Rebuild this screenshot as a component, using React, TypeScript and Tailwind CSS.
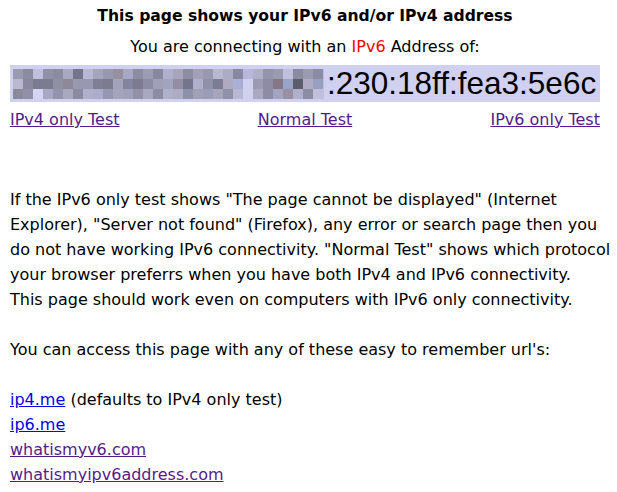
import React from "react";

const grid: string[][] = [
  ["#9b9bb0", "#8a8ca2", "#c0c0dc", "#9090a8", "#8c8ca0", "#a8a8c0", "#74748a", "#b8b8d4", "#a4a4bc", "#9898b0", "#96909f", "#a8a8c4", "#8c8ca2", "#9c9cb4", "#88889c", "#b0b0cc", "#a8a4bc", "#8c8ca2", "#a4a0b8", "#9898b0", "#b8b8d0", "#acacc4", "#8888a0", "#b8b8dc", "#b0b0c8", "#9494ac", "#9a9ab0", "#c0c0dc", "#8c8aa0", "#9a9ab0", "#8c8ca4"],
  ["#b8b8d0", "#8888a0", "#7c7c90", "#7a7c90", "#9090a4", "#8e8898", "#9898b0", "#9898b0", "#807e94", "#7c7c90", "#a4a4bc", "#8484a0", "#7c7c90", "#8c8ca4", "#a0a0b8", "#a0a4bc", "#948ea4", "#74748c", "#b0b0cc", "#9090a8", "#7c7c94", "#b0aac0", "#a8b0d4", "#d0d0f0", "#9c9ab0", "#8c8ca4", "#847888", "#98a4c8", "#5c5c6c", "#b0aac4", "#98a0c0"],
  ["#8a8a9c", "#9090a8", "#d4d4f4", "#a8a8c4", "#9494ac", "#a8a8c0", "#8a8aa0", "#b0b0cc", "#acaccc", "#9696b0", "#a4a4bc", "#a0a0b8", "#9490a8", "#a8a8c0", "#8c8ca2", "#b0b0cc", "#acacc4", "#8c90a8", "#a0a0b8", "#9c9cb8", "#a8a4bc", "#9090a8", "#b8b8d4", "#d0d0f0", "#a8a8c0", "#8c8ca4", "#a4a4c0", "#9890a4", "#b0b0cc", "#8c8ca4", "#c0c0dc"],
];

function Pixelated() {
  return (
    <svg width={311} height={30} viewBox="0 0 311 30" className="block shrink-0">
      {grid.map((row, y) =>
        row.map((c, x) => <rect key={`${x}-${y}`} x={x * 10} y={y * 10} width={10} height={10} fill={c} />)
      )}
      <rect x={310} y={0} width={1} height={30} fill="#b8c0e0" />
    </svg>
  );
}

export default function App() {
  return (
    <div className="w-[617px] h-[492px] bg-white text-black text-[16px] leading-[25px] overflow-hidden font-['DejaVu_Sans',Verdana,sans-serif]">
      <div className="ml-[10px] w-[590px] pt-[4px]">
        <div className="text-center font-bold text-[15.6px]">This page shows your IPv6 and/or IPv4 address</div>
        <div className="text-center mt-[5px]">
          You are connecting with an <span className="text-[#ff0000]">IPv6</span> Address of:
        </div>
        <div className="mt-[6px] h-[37px] bg-[#d0d0f0] flex items-center pl-[3px]">
          <Pixelated />
          <span className="text-[31.5px] leading-[37px] ml-[3px] font-['Liberation_Sans',Arial,sans-serif]">
            :230:18ff:fea3:5e6c
          </span>
        </div>
        <div className="flex justify-between mt-[5px]">
          <a href="#" className="underline text-[#551a8b]">IPv4 only Test</a>
          <a href="#" className="underline text-[#551a8b]">Normal Test</a>
          <a href="#" className="underline text-[#551a8b]">IPv6 only Test</a>
        </div>
        <p className="mt-[55px] w-[604px] whitespace-nowrap">
          If the IPv6 only test shows "The page cannot be displayed" (Internet
          <br />
          Explorer), "Server not found" (Firefox), any error or search page then you
          <br />
          do not have working IPv6 connectivity. "Normal Test" shows which protocol
          <br />
          your browser preferrs when you have both IPv4 and IPv6 connectivity.
          <br />
          This page should work even on computers with IPv6 only connectivity.
        </p>
        <p className="mt-[25px]">You can access this page with any of these easy to remember url's:</p>
        <div className="mt-[25px]">
          <div>
            <a href="#" className="underline text-[#0000ee]">ip4.me</a> (defaults to IPv4 only test)
          </div>
          <div>
            <a href="#" className="underline text-[#0000ee]">ip6.me</a>
          </div>
          <div>
            <a href="#" className="underline text-[#551a8b]">whatismyv6.com</a>
          </div>
          <div>
            <a href="#" className="underline text-[#551a8b]">whatismyipv6address.com</a>
          </div>
        </div>
      </div>
    </div>
  );
}
